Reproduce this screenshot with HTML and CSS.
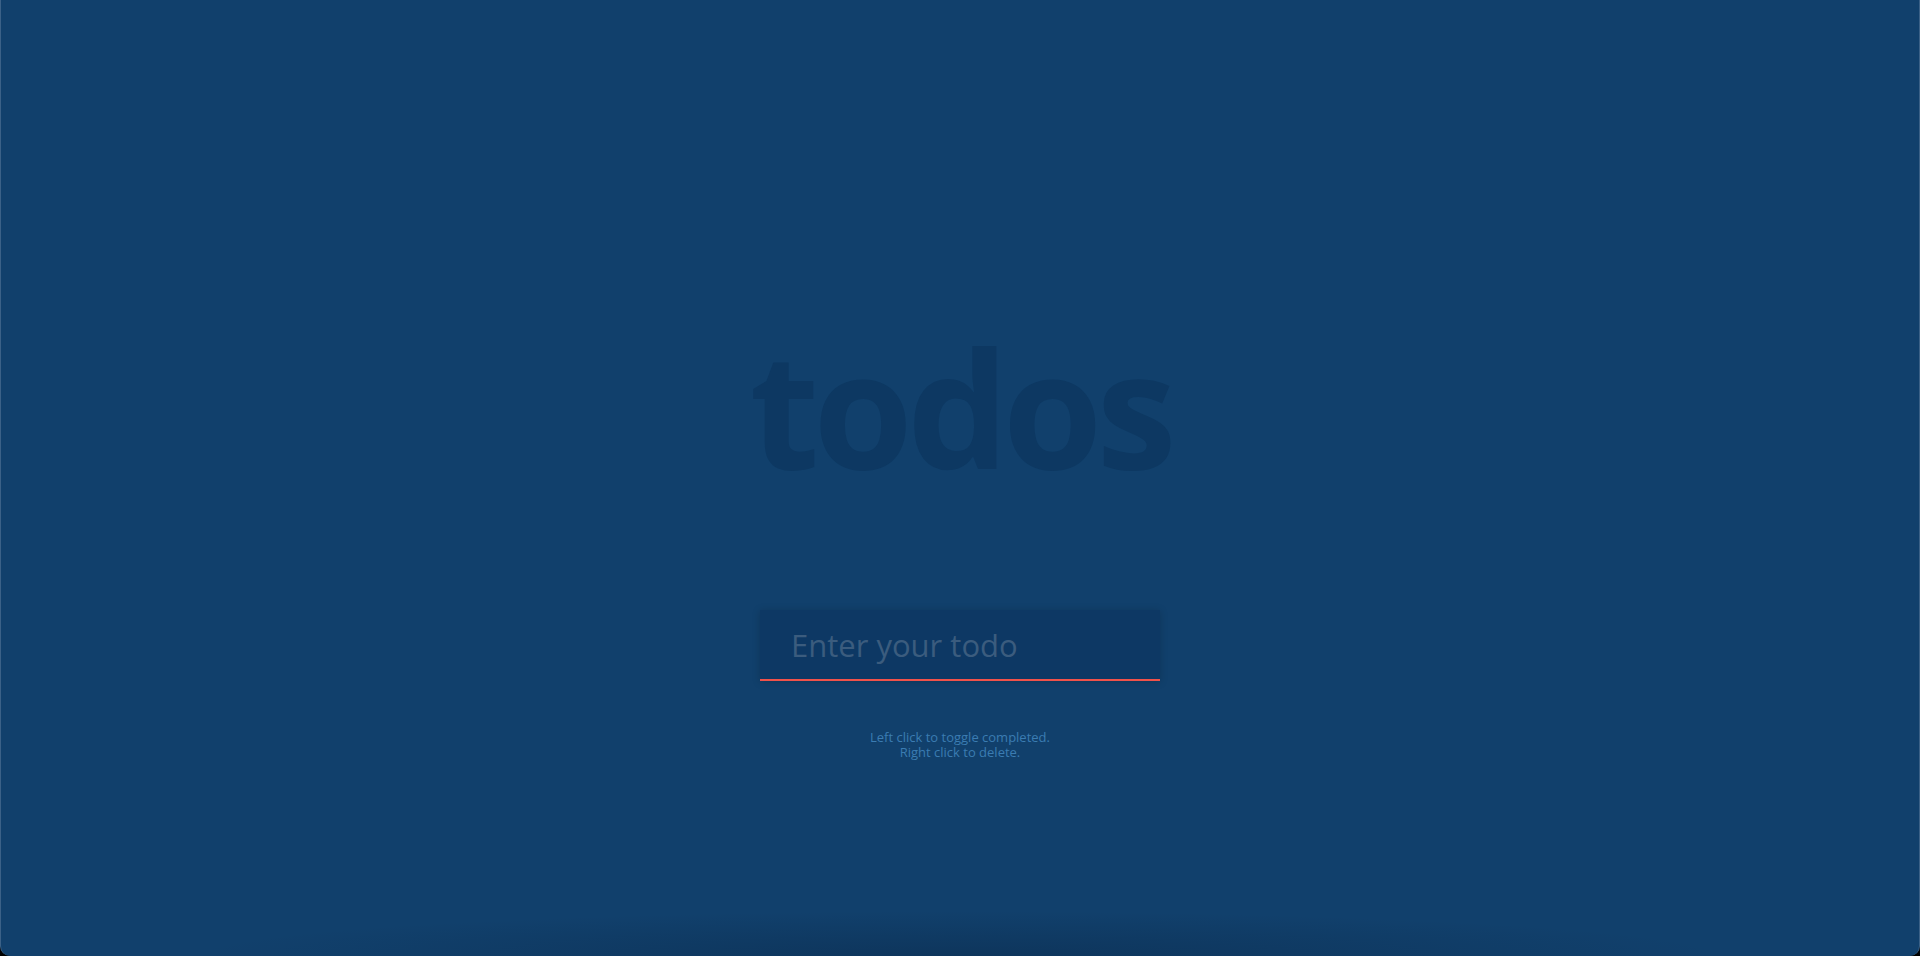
FILE: index.html
```html
<!DOCTYPE html>
<html lang="en">
<head>
<meta charset="utf-8">
<title>todos</title>
<link rel="stylesheet" href="styles.css">
</head>
<body>
<div class="frame">
  <main class="app">
    <h1 class="title">todos</h1>
    <form class="todo-form">
      <input class="todo-input" type="text" placeholder="Enter your todo">
    </form>
    <p class="hint">Left click to toggle completed.<br>Right click to delete.</p>
  </main>
  <div class="bottom-shade"></div>
</div>
</body>
</html>
```

FILE: styles.css
```css
html, body {
  margin: 0;
  padding: 0;
  height: 100%;
  background: #000;
}

.frame {
  position: relative;
  height: 956px;
  box-sizing: border-box;
  background: #11406c;
  border-left: 1px solid #3b6187;
  border-right: 1px solid #3b6187;
  border-radius: 0 0 10px 10px;
  overflow: hidden;
  font-family: "Open Sans", "Noto Sans", sans-serif;
}

.app {
  display: flex;
  flex-direction: column;
  align-items: center;
  padding-top: 326px;
}

.title {
  margin: 0;
  font-size: 161px;
  line-height: 161px;
  font-weight: 700;
  color: #0d3862;
  letter-spacing: -6px;
}

.todo-form {
  margin: 123px 0 0;
}

.todo-input {
  display: block;
  width: 400px;
  height: 71px;
  box-sizing: border-box;
  padding: 0 20px 0 31px;
  border: none;
  border-bottom: 2px solid #f0524a;
  background: #0d3864;
  box-shadow: 0 1px 8px rgba(0, 0, 0, 0.18);
  font-family: "Open Sans", "Noto Sans", sans-serif;
  font-size: 31px;
  color: #9fb6cc;
  outline: none;
}

.todo-input::placeholder {
  color: #3b5c7e;
}

.hint {
  margin: 49px 0 0;
  font-size: 13px;
  line-height: 15px;
  text-align: center;
  color: #3b7cb2;
}

.bottom-shade {
  position: absolute;
  left: 0;
  right: 0;
  bottom: 0;
  height: 45px;
  background: radial-gradient(ellipse 40% 100% at 50% 100%, rgba(5, 25, 50, 0.28), rgba(5, 25, 50, 0) 100%);
  pointer-events: none;
}
```
